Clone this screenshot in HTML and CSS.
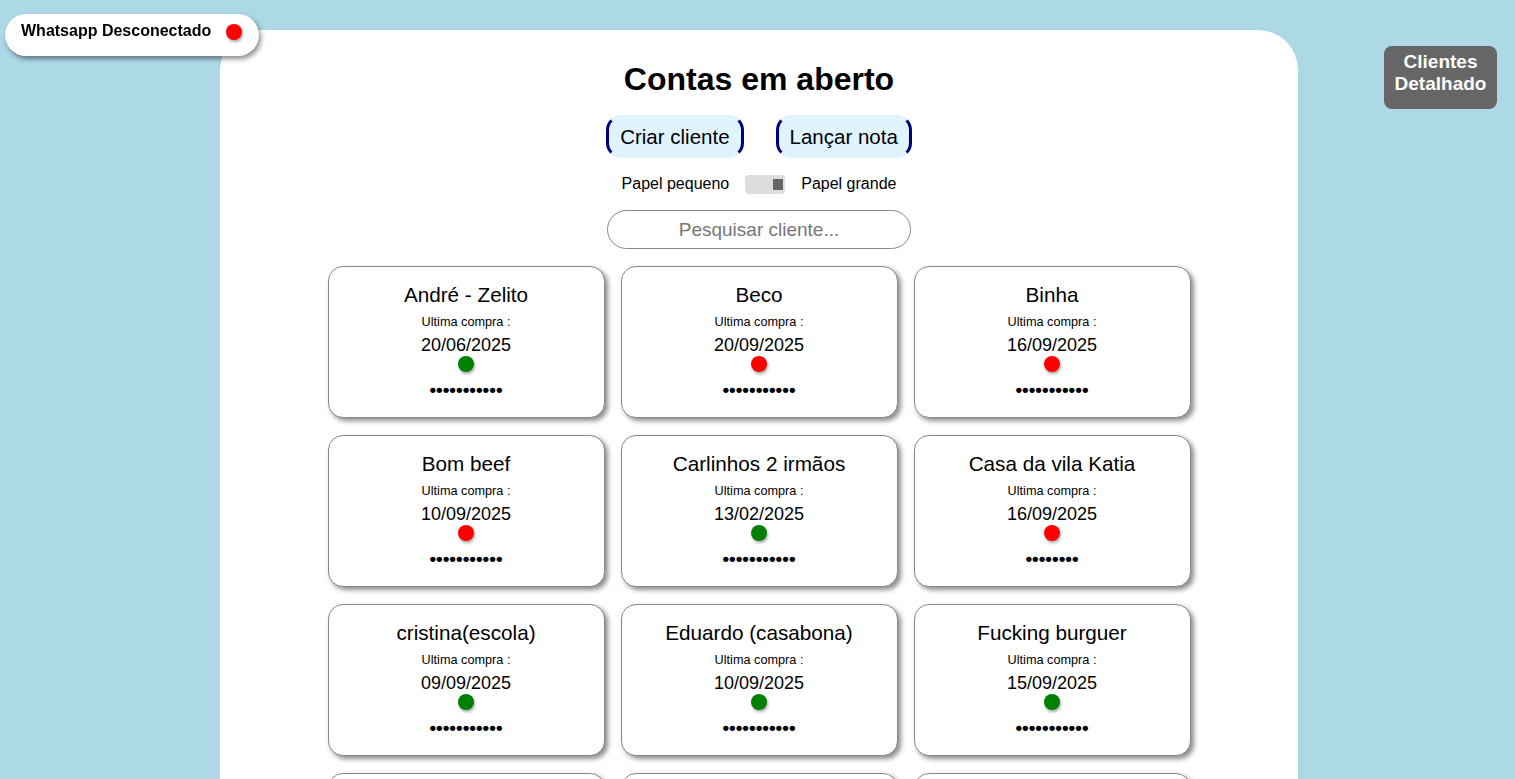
FILE: index.html
```html
<!DOCTYPE html>
<html lang="pt-BR">
<head>
<meta charset="utf-8">
<title>Contas em aberto</title>
<link rel="stylesheet" href="styles.css">
</head>
<body>
<div class="status">
  <span class="status-text">Whatsapp Desconectado</span>
  <span class="status-dot"></span>
</div>
<button class="detail-btn">Clientes<br>Detalhado</button>
<main class="panel">
  <h1 class="title">Contas em aberto</h1>
  <div class="actions">
    <button class="action-btn">Criar cliente</button>
    <button class="action-btn">Lançar nota</button>
  </div>
  <div class="paper">
    <span>Papel pequeno</span>
    <span class="switch"><span class="knob"></span></span>
    <span>Papel grande</span>
  </div>
  <input class="search" type="text" placeholder="Pesquisar cliente...">
  <div class="grid">
    <div class="card"><div class="name">André - Zelito</div><div class="label">Ultima compra :</div><div class="date">20/06/2025</div><span class="dot green"></span><div class="mask">•••••••••••</div></div>
    <div class="card"><div class="name">Beco</div><div class="label">Ultima compra :</div><div class="date">20/09/2025</div><span class="dot red"></span><div class="mask">•••••••••••</div></div>
    <div class="card"><div class="name">Binha</div><div class="label">Ultima compra :</div><div class="date">16/09/2025</div><span class="dot red"></span><div class="mask">•••••••••••</div></div>
    <div class="card"><div class="name">Bom beef</div><div class="label">Ultima compra :</div><div class="date">10/09/2025</div><span class="dot red"></span><div class="mask">•••••••••••</div></div>
    <div class="card"><div class="name">Carlinhos 2 irmãos</div><div class="label">Ultima compra :</div><div class="date">13/02/2025</div><span class="dot green"></span><div class="mask">•••••••••••</div></div>
    <div class="card"><div class="name">Casa da vila Katia</div><div class="label">Ultima compra :</div><div class="date">16/09/2025</div><span class="dot red"></span><div class="mask">••••••••</div></div>
    <div class="card"><div class="name">cristina(escola)</div><div class="label">Ultima compra :</div><div class="date">09/09/2025</div><span class="dot green"></span><div class="mask">•••••••••••</div></div>
    <div class="card"><div class="name">Eduardo (casabona)</div><div class="label">Ultima compra :</div><div class="date">10/09/2025</div><span class="dot green"></span><div class="mask">•••••••••••</div></div>
    <div class="card"><div class="name">Fucking burguer</div><div class="label">Ultima compra :</div><div class="date">15/09/2025</div><span class="dot green"></span><div class="mask">•••••••••••</div></div>
    <div class="card"></div>
    <div class="card"></div>
    <div class="card"></div>
  </div>
</main>
</body>
</html>
```
FILE: styles.css
```css
html, body {
  margin: 0;
  padding: 0;
}
body {
  background: #add8e6;
  font-family: "Liberation Sans", Arial, sans-serif;
  color: #000;
  height: 779px;
  overflow: hidden;
}
.status {
  position: fixed;
  top: 14px;
  left: 5px;
  width: 254px;
  height: 42px;
  box-sizing: border-box;
  background: #fff;
  border-radius: 21px;
  box-shadow: 2px 3px 5px rgba(0,0,0,0.45);
  display: flex;
  align-items: center;
  padding-left: 16px;
  z-index: 5;
}
.status-text {
  font-weight: bold;
  font-size: 16px;
  position: relative;
  top: -4px;
}
.status-dot {
  width: 16px;
  height: 16px;
  border-radius: 50%;
  background: #ff0000;
  margin-left: 15px;
  position: relative;
  top: -3px;
  box-shadow: 1px 2px 3px rgba(0,0,0,0.35);
}
.detail-btn {
  position: fixed;
  top: 46px;
  left: 1384px;
  width: 113px;
  height: 63px;
  background: #666666;
  color: #fff;
  border: none;
  border-radius: 8px;
  font-family: "Liberation Sans", Arial, sans-serif;
  font-weight: bold;
  font-size: 19px;
  line-height: 22px;
  padding: 5px 0 14px;
  display: flex;
  flex-direction: column;
  align-items: center;
  justify-content: flex-start;
}
.panel {
  width: 1078px;
  margin: 30px 0 0 220px;
  min-height: 760px;
  background: #fff;
  border-radius: 40px 40px 0 0;
  display: flex;
  flex-direction: column;
  align-items: center;
  padding-top: 20px;
  box-sizing: border-box;
}
.title {
  margin: 0;
  font-size: 32px;
  line-height: 58px;
  font-weight: bold;
}
.actions {
  display: flex;
  gap: 32px;
  margin-top: 7px;
}
.action-btn {
  height: 43px;
  background: #e0f4ff;
  border: 3px solid #000080;
  border-top-color: transparent;
  border-bottom-color: transparent;
  border-radius: 15px;
  font-family: "Liberation Sans", Arial, sans-serif;
  font-size: 20.5px;
  color: #000;
  padding: 0 11px;
}
.paper {
  display: flex;
  align-items: center;
  gap: 16px;
  font-size: 16px;
  margin-top: 16px;
  height: 20px;
}
.switch {
  width: 40px;
  height: 19px;
  background: #dddddd;
  border-radius: 4px;
  display: flex;
  align-items: center;
  justify-content: flex-end;
  padding-right: 2px;
  box-sizing: border-box;
}
.knob {
  width: 10px;
  height: 11px;
  background: #666666;
}
.search {
  margin-top: 16px;
  width: 304px;
  height: 39px;
  box-sizing: border-box;
  border: 1px solid #888;
  border-radius: 20px;
  text-align: center;
  font-family: "Liberation Sans", Arial, sans-serif;
  font-size: 19px;
  outline: none;
}
.search::placeholder {
  color: #777;
}
.grid {
  margin-top: 17px;
  display: grid;
  grid-template-columns: repeat(3, 277px);
  column-gap: 16px;
  row-gap: 17px;
}
.card {
  height: 152px;
  box-sizing: border-box;
  border: 1px solid #888;
  border-radius: 15px;
  box-shadow: 3px 3px 5px rgba(0,0,0,0.45);
  display: flex;
  flex-direction: column;
  align-items: center;
  padding-top: 16px;
  background: #fff;
}
.name {
  font-size: 20.7px;
  line-height: 24px;
}
.label {
  font-size: 12.7px;
  line-height: 14px;
  margin-top: 8px;
}
.date {
  font-size: 18px;
  line-height: 20px;
  margin-top: 6px;
}
.dot {
  width: 16px;
  height: 16px;
  border-radius: 50%;
  margin-top: 1px;
  box-shadow: 1px 2px 3px rgba(0,0,0,0.35);
}
.dot.green { background: #008000; }
.dot.red { background: #ff0000; }
.mask {
  font-size: 19px;
  font-weight: bold;
  line-height: 18px;
  margin-top: 9px;
}
```
